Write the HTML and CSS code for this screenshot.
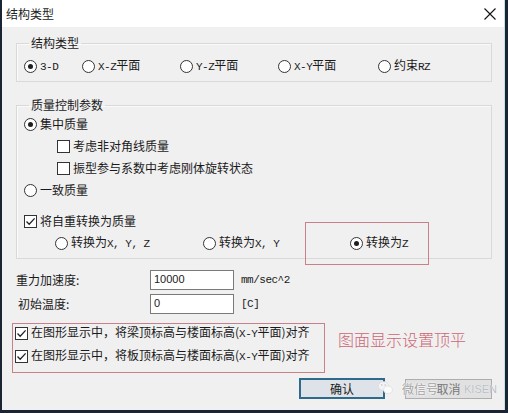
FILE: index.html
```html
<!DOCTYPE html>
<html lang="zh">
<head>
<meta charset="utf-8">
<title>结构类型</title>
<link rel="stylesheet" href="styles.css">
</head>
<body>
<div class="window">
  <div class="titlebar">
    <span class="title">结构类型</span>
    <svg class="close" width="12" height="12" viewBox="0 0 12 12"><path d="M0.5 0.5 L11.5 11.5 M11.5 0.5 L0.5 11.5" stroke="#111" stroke-width="1.1" fill="none"/></svg>
  </div>
  <div class="content">
    <fieldset class="group g1">
      <legend>结构类型</legend>
      <div class="radiorow">
        <label class="opt"><span class="radio on"></span><span class="t"><span class="m">3-D</span></span></label>
        <label class="opt"><span class="radio"></span><span class="t"><span class="m">X-Z</span>平面</span></label>
        <label class="opt"><span class="radio"></span><span class="t"><span class="m">Y-Z</span>平面</span></label>
        <label class="opt"><span class="radio"></span><span class="t"><span class="m">X-Y</span>平面</span></label>
        <label class="opt"><span class="radio"></span><span class="t">约束<span class="m">RZ</span></span></label>
      </div>
    </fieldset>

    <fieldset class="group g2">
      <legend>质量控制参数</legend>
      <div class="stack">
        <label class="opt"><span class="radio on"></span><span class="t">集中质量</span></label>
        <label class="opt sub"><span class="check"></span><span class="t">考虑非对角线质量</span></label>
        <label class="opt sub"><span class="check"></span><span class="t">振型参与系数中考虑刚体旋转状态</span></label>
        <label class="opt"><span class="radio"></span><span class="t">一致质量</span></label>
        <label class="opt sp"><span class="check on"><svg width="11" height="11" viewBox="0 0 11 11"><polyline points="1.5,5.5 4.2,8.3 9.6,2.4" fill="none" stroke="#222" stroke-width="1.3"/></svg></span><span class="t">将自重转换为质量</span></label>
        <div class="convrow">
          <label class="opt"><span class="radio"></span><span class="t">转换为<span class="m">X, Y, Z</span></span></label>
          <label class="opt"><span class="radio"></span><span class="t">转换为<span class="m">X, Y</span></span></label>
          <label class="opt mark"><span class="radio on"></span><span class="t">转换为<span class="m">Z</span></span></label>
        </div>
      </div>
    </fieldset>

    <div class="field f1">
      <span class="flabel">重力加速度:</span>
      <span class="input">10000</span>
      <span class="unit m">mm/sec^2</span>
    </div>
    <div class="field f2">
      <span class="flabel l2">初始温度:</span>
      <span class="input">0</span>
      <span class="unit m">[C]</span>
    </div>

    <div class="notes">
      <div class="redbox">
        <label class="opt"><span class="check on"><svg width="11" height="11" viewBox="0 0 11 11"><polyline points="1.5,5.5 4.2,8.3 9.6,2.4" fill="none" stroke="#222" stroke-width="1.3"/></svg></span><span class="t">在图形显示中，将梁顶标高与楼面标高(<span class="m">X-Y</span>平面)对齐</span></label>
        <label class="opt"><span class="check on"><svg width="11" height="11" viewBox="0 0 11 11"><polyline points="1.5,5.5 4.2,8.3 9.6,2.4" fill="none" stroke="#222" stroke-width="1.3"/></svg></span><span class="t">在图形显示中，将板顶标高与楼面标高(<span class="m">X-Y</span>平面)对齐</span></label>
      </div>
      <div class="redtext">图面显示设置顶平</div>
    </div>

    <div class="buttons">
      <button class="btn ok">确认</button>
      <button class="btn cancel">取消</button>
      <div class="watermark">
        <svg class="wx" width="15" height="14" viewBox="0 0 15 14"><ellipse cx="5.5" cy="5" rx="5.2" ry="4.4" fill="#f4f4f4" stroke="#d8d8d8" stroke-width="0.6"/><ellipse cx="10" cy="8.8" rx="4.4" ry="3.7" fill="#fafafa" stroke="#d8d8d8" stroke-width="0.6"/><circle cx="3.8" cy="4" r="0.7" fill="#bbb"/><circle cx="7.2" cy="4" r="0.7" fill="#bbb"/></svg>
        <span class="wt1">微信号</span>
        <span class="wt2">KISEN</span>
      </div>
    </div>
  </div>
</div>
</body>
</html>
```

FILE: styles.css
```css
html, body {
  margin: 0;
  padding: 0;
}
body {
  width: 508px;
  height: 413px;
  background: #1b2432;
  overflow: hidden;
  font-family: "Noto Sans CJK SC", "Liberation Sans", sans-serif;
  font-size: 12px;
  color: #1a1a1a;
}
.window {
  margin-left: 2px;
  width: 503px;
  height: 410px;
  background: #f0f0f0;
  border-right: 1px solid #bfe3ea;
  box-sizing: border-box;
  display: flex;
  flex-direction: column;
  overflow: hidden;
}
.titlebar {
  height: 27px;
  flex: none;
  background: #ffffff;
  display: flex;
  align-items: center;
  justify-content: space-between;
  padding: 0 8px 0 4px;
}
.title {
  font-size: 12px;
  line-height: 14px;
  color: #222;
}
.content {
  padding: 9px 12px 0 14px;
  display: flex;
  flex-direction: column;
}
.t {
  white-space: nowrap;
  line-height: 14px;
}
.m {
  font-family: "Liberation Mono", monospace;
  font-size: 11px;
  letter-spacing: -0.5px;
  vertical-align: baseline;
}
.group {
  margin: 0;
  border: 1px solid #d9d9d9;
  box-shadow: inset 1px 1px 0 #fafafa;
  min-width: 0;
}
.group legend {
  padding: 0 2px;
  margin-left: 5px;
  line-height: 14px;
  font-size: 12px;
}
.g1 {
  padding: 9px 0 8px 7px;
}
.g2 {
  margin-top: 16px;
  padding: 5px 0 8px 7px;
}
.opt {
  display: inline-flex;
  align-items: center;
  gap: 3px;
  height: 14px;
  line-height: 14px;
  white-space: nowrap;
}
.radio {
  width: 11px;
  height: 11px;
  border: 1px solid #333;
  border-radius: 50%;
  background: #fff;
  position: relative;
  flex: none;
}
.radio.on::after {
  content: "";
  position: absolute;
  left: 3px;
  top: 3px;
  width: 5px;
  height: 5px;
  border-radius: 50%;
  background: #1e1e1e;
}
.check {
  width: 11px;
  height: 11px;
  border: 1px solid #333;
  background: #fff;
  flex: none;
  display: flex;
}
.radiorow {
  display: grid;
  grid-template-columns: 58px 98px 98px 100px auto;
}
.stack {
  display: flex;
  flex-direction: column;
  align-items: flex-start;
  gap: 8px;
}
.sub {
  margin-left: 33px;
}
.sp {
  margin-top: 9px;
}
.convrow {
  display: grid;
  grid-template-columns: 148px 147px auto;
  margin-left: 31px;
}
.mark {
  position: relative;
}
.mark::before {
  content: "";
  position: absolute;
  left: -45px;
  top: -14px;
  width: 122px;
  height: 41px;
  border: 1px solid #c98088;
}
.field {
  display: flex;
  align-items: center;
  height: 20px;
}
.f1 {
  margin-top: 11px;
}
.f2 {
  margin-top: 4px;
}
.flabel {
  width: 134px;
  flex: none;
  line-height: 14px;
}
.flabel.l2 {
  padding-left: 2px;
  width: 132px;
}
.input {
  width: 84px;
  height: 20px;
  box-sizing: border-box;
  border: 1px solid #7a7a7a;
  background: #fff;
  padding-left: 3px;
  font-family: "Liberation Sans", sans-serif;
  font-size: 11px;
  line-height: 17px;
}
.unit {
  margin-left: 7px;
}
.notes {
  display: flex;
  align-items: flex-start;
  margin-top: 9px;
  margin-left: -4px;
}
.redbox {
  width: 313px;
  height: 50px;
  box-sizing: border-box;
  border: 1px solid #c98088;
  padding: 2px 0 0 2px;
  display: flex;
  flex-direction: column;
  align-items: flex-start;
  gap: 9px;
}
.redtext {
  margin-left: 13px;
  margin-top: 6px;
  font-size: 16px;
  line-height: 20px;
  color: #cc6573;
  font-weight: 300;
}
.buttons {
  position: relative;
  display: flex;
  justify-content: flex-end;
  align-items: flex-start;
  gap: 20px;
  margin-top: 5px;
}
.btn {
  font-family: "Noto Sans CJK SC", sans-serif;
  font-size: 12px;
  line-height: 14px;
  color: #1a1a1a;
  padding: 0;
  margin: 0;
  box-sizing: border-box;
}
.ok {
  width: 86px;
  height: 21px;
  border: 2px solid #2d6a8c;
  background: #dde3e8;
}
.cancel {
  width: 87px;
  height: 20px;
  margin-top: 1px;
  border: 1px solid #adadad;
  background: #e1e1e1;
  color: #777;
}
.watermark {
  position: absolute;
  left: 362px;
  top: 2px;
  width: 130px;
  height: 18px;
  pointer-events: none;
}
.wx {
  position: absolute;
  left: 0;
  top: 1px;
}
.wt1 {
  position: absolute;
  left: 24px;
  top: 1px;
  line-height: 16px;
  font-size: 12px;
  color: #a3a3a3;
  text-shadow: 0 0 2px #fff, 0 0 2px #fff;
}
.wt2 {
  position: absolute;
  left: 86px;
  top: 1px;
  line-height: 16px;
  font-family: "Liberation Sans", sans-serif;
  font-size: 11px;
  color: #b7bfc8;
  text-shadow: 0 0 1px #fff;
}
```
